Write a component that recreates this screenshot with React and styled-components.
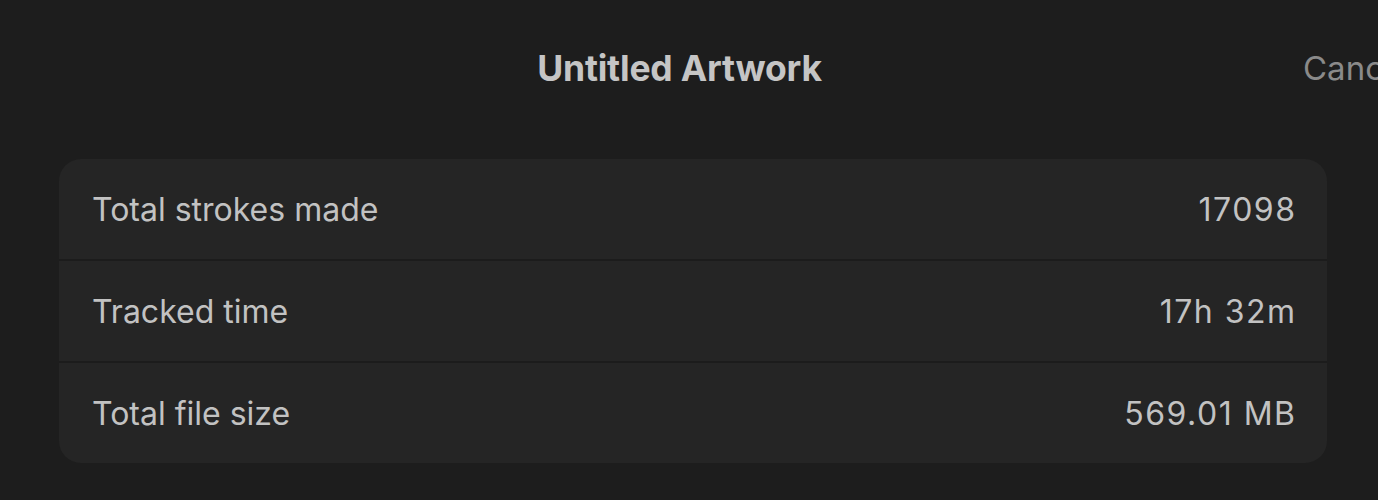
import React from 'react';
import styled, { createGlobalStyle } from 'styled-components';

const GlobalStyle = createGlobalStyle`
  html, body {
    margin: 0;
    padding: 0;
    background: #1d1d1d;
    overflow: hidden;
  }
  body {
    font-family: Inter, "Noto Sans", "Liberation Sans", sans-serif;
    -webkit-font-smoothing: antialiased;
  }
`;

const Page = styled.div`
  width: 1378px;
  height: 500px;
  background: #1d1d1d;
  display: flex;
  flex-direction: column;
`;

const Header = styled.header`
  position: relative;
  height: 136px;
  padding-right: 19px;
  display: flex;
  align-items: center;
  justify-content: center;
`;

const Title = styled.h1`
  margin: 0;
  font-size: 35.5px;
  font-weight: 700;
  color: #c5c5c5;
  letter-spacing: -0.2px;
`;

// the nav button runs off the right edge of the viewport, as in the source
const CancelButton = styled.button`
  position: absolute;
  left: 1303px;
  top: 50%;
  transform: translateY(-50%);
  background: none;
  border: none;
  padding: 0;
  font-family: inherit;
  font-size: 33px;
  color: #8a8a8a;
  white-space: nowrap;
  cursor: pointer;
`;

const Card = styled.section`
  margin: 23px 51px 0 59px;
  background: #252525;
  border-radius: 22px;
  overflow: hidden;
`;

const Row = styled.div`
  height: 100px;
  padding: 0 32px 0 33px;
  display: flex;
  align-items: center;
  justify-content: space-between;
  font-size: 32px;
  color: #c2c2c2;
  border-top: ${props => (props.$first ? 'none' : '2px solid #1c1c1c')};
`;

const Label = styled.span``;

const Value = styled.span`
  letter-spacing: 1.5px;
  margin-right: -1.5px;
`;

const stats = [
  { label: 'Total strokes made', value: '17098' },
  { label: 'Tracked time', value: '17h 32m' },
  { label: 'Total file size', value: '569.01 MB' },
];

export default function App() {
  return (
    <>
      <GlobalStyle />
      <Page>
        <Header>
          <Title>Untitled Artwork</Title>
          <CancelButton type="button">Cancel</CancelButton>
        </Header>
        <Card>
          {stats.map((s, i) => (
            <Row key={s.label} $first={i === 0}>
              <Label>{s.label}</Label>
              <Value>{s.value}</Value>
            </Row>
          ))}
        </Card>
      </Page>
    </>
  );
}
